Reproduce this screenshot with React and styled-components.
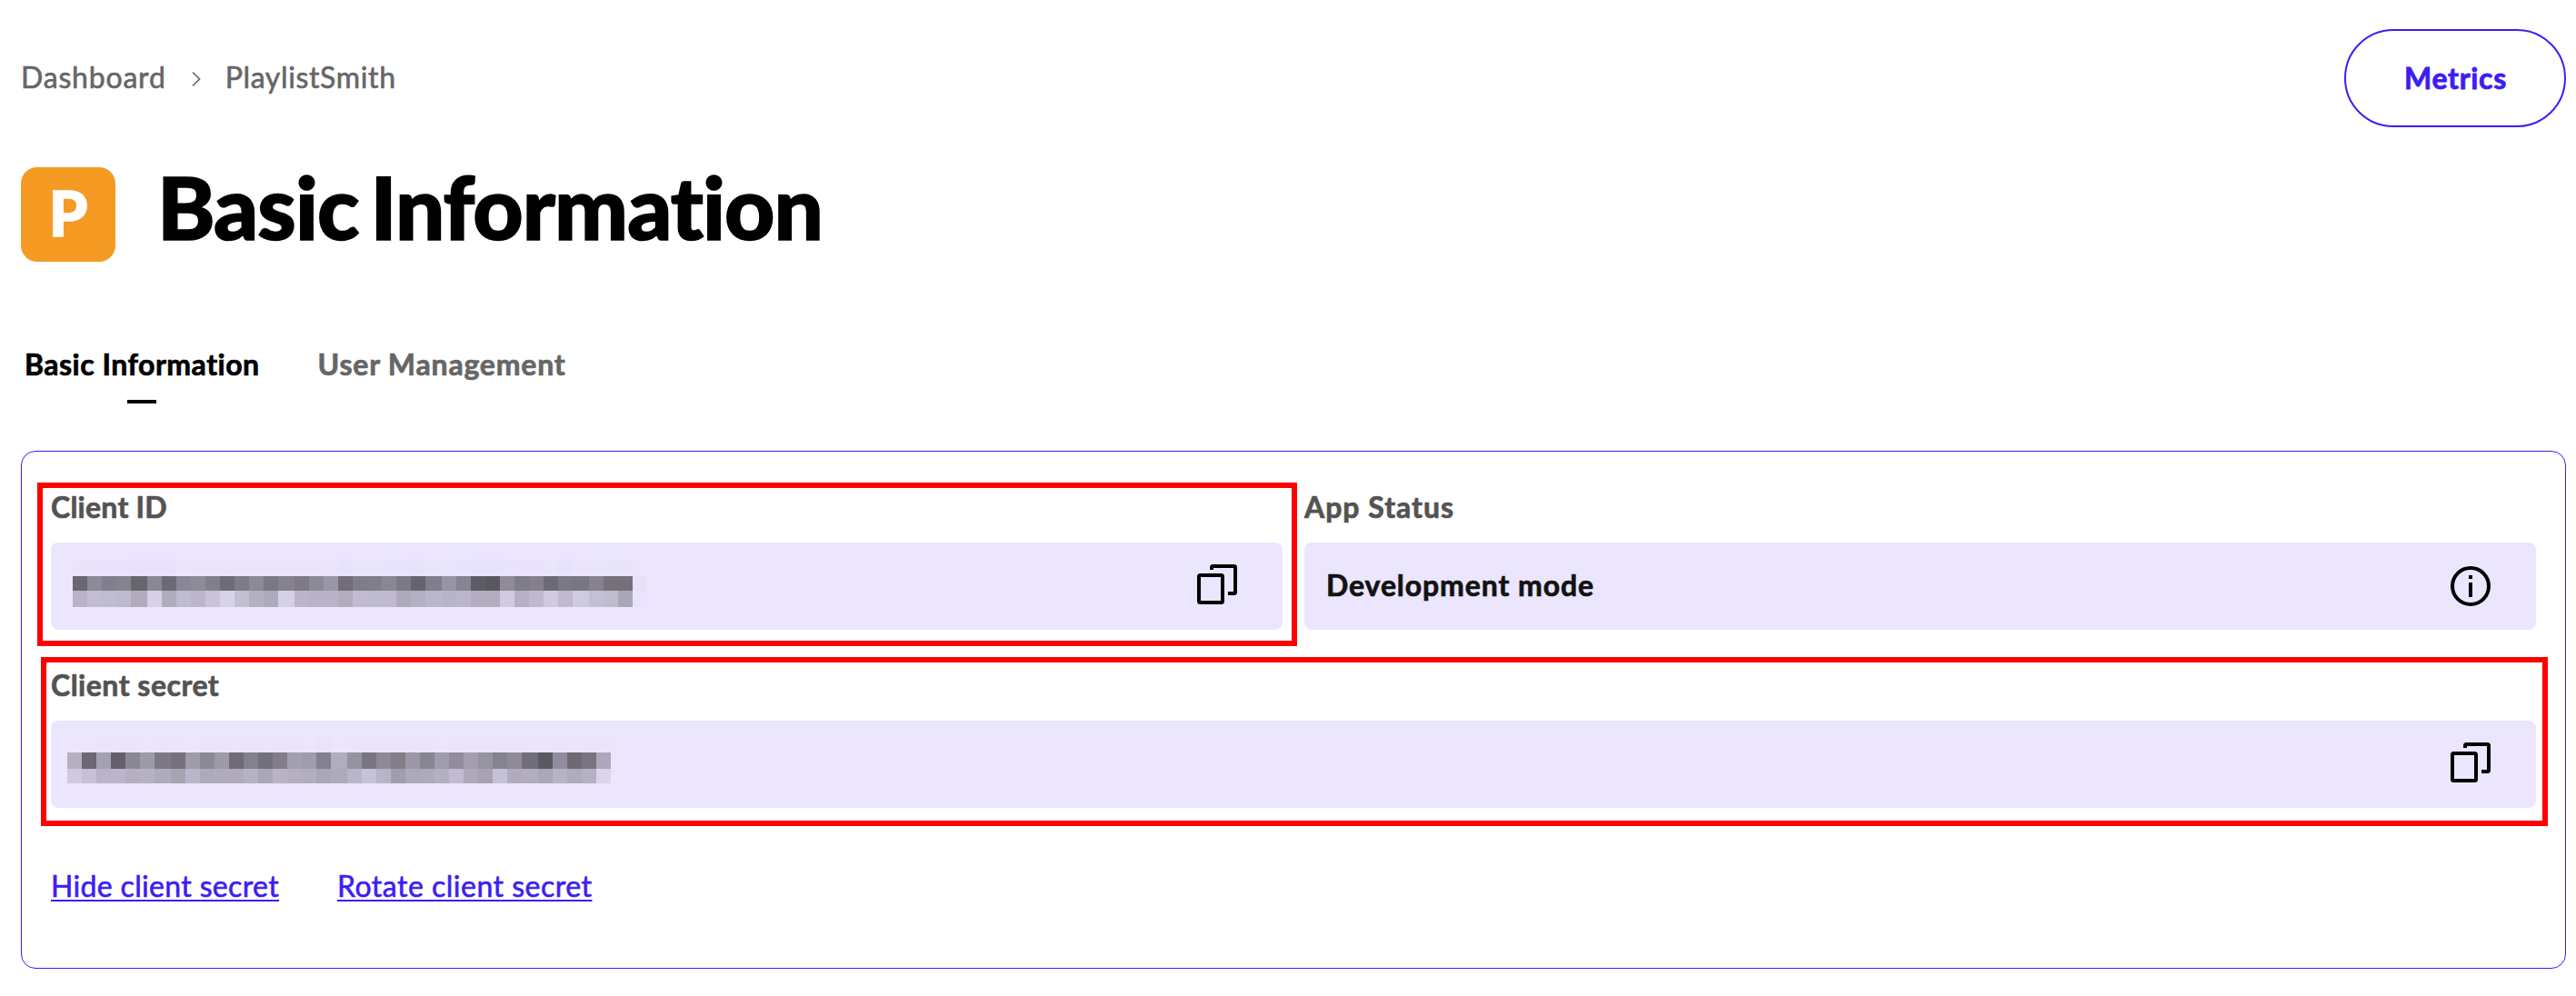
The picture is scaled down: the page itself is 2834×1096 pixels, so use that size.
import React from "react";
import styled, { createGlobalStyle } from "styled-components";

const violet = "#3d1df3";
const lavender = "#ebe6fe";

const GlobalStyle = createGlobalStyle`
  *, *::before, *::after { box-sizing: border-box; }
  body {
    margin: 0;
    background: #fff;
    color: #000;
    font-family: Lato, "Open Sans", sans-serif;
    font-size: 32px;
    line-height: 40px;
  }
`;

const Page = styled.main`
  display: flex;
  flex-direction: column;
  padding: 32px 11px 30px 23px;
`;

const TopBar = styled.header`
  display: flex;
  align-items: center;
  justify-content: space-between;
  height: 108px;
`;

const Breadcrumb = styled.nav`
  display: flex;
  align-items: center;
  padding-bottom: 2px;
  color: #666;
  -webkit-text-stroke: 0.6px currentColor;
`;

const Crumb = styled.span`
  letter-spacing: ${(p) => p.$tracking}px;
  white-space: nowrap;
`;

const Chevron = styled.svg`
  display: block;
  width: 12px;
  height: 18px;
  margin: 3px 26px 0 27px;
`;

const OutlineButton = styled.button`
  width: 244px;
  height: 108px;
  padding: 0 0 1px 1px;
  border: 2px solid ${violet};
  border-radius: 54px;
  background: transparent;
  color: ${violet};
  font: inherit;
  font-weight: 700;
  letter-spacing: 0.7px;
  -webkit-text-stroke: 0.8px currentColor;
`;

const TitleRow = styled.div`
  display: flex;
  gap: 46px;
  height: 104px;
  margin-top: 44px;
`;

const AppBadge = styled.div`
  display: flex;
  align-items: center;
  justify-content: center;
  width: 104px;
  height: 104px;
  padding: 0 0 4px 0;
  border-radius: 18px;
  background: #f59b23;
  color: #fff;
  font-size: 68px;
  font-weight: 900;
  -webkit-text-stroke: 1.6px currentColor;
`;

const Title = styled.h1`
  margin: 0;
  font-size: 96px;
  font-weight: 900;
  line-height: 86px;
  letter-spacing: -0.9px;
  word-spacing: -9px;
  white-space: nowrap;
  -webkit-text-stroke: 1.6px currentColor;
`;

const Tabs = styled.nav`
  display: flex;
  gap: 64px;
  height: 63px;
  margin-top: 93px;
  padding-left: 4px;
`;

const Tab = styled.div`
  display: flex;
  flex-direction: column;
  align-items: center;
  gap: 19px;
  color: ${(p) => (p.$active ? "#000" : "#666")};
  font-weight: 700;
  letter-spacing: ${(p) => p.$tracking}px;
  white-space: nowrap;
  -webkit-text-stroke: 0.7px currentColor;
`;

const TabMarker = styled.span`
  width: 32px;
  height: 4px;
  background: #000;
`;

const Card = styled.section`
  height: 570px;
  margin-top: 52px;
  padding: 41px 32px;
  border: 1px solid ${violet};
  border-radius: 16px;
`;

const FieldGrid = styled.div`
  display: grid;
  grid-template-columns: 1fr 1fr;
  gap: 41px 24px;
`;

const Field = styled.div`
  position: relative;
  display: flex;
  flex-direction: column;
  gap: 19px;
  grid-column: ${(p) => (p.$wide ? "1 / -1" : "auto")};
`;

const Highlight = styled.div`
  position: absolute;
  inset: ${(p) => p.$inset};
  border: 6px solid #f00;
  pointer-events: none;
`;

const Label = styled.div`
  color: #535353;
  font-weight: 700;
  letter-spacing: ${(p) => p.$tracking}px;
  -webkit-text-stroke: 0.7px currentColor;
`;

const ValueBox = styled.div`
  display: flex;
  align-items: center;
  justify-content: space-between;
  height: 96px;
  padding: 0 50px 0 ${(p) => p.$indent}px;
  border-radius: 8px;
  background: ${lavender};
`;

const ValueText = styled.span`
  padding-bottom: 2px;
  color: #121212;
  font-weight: 700;
  letter-spacing: 0.9px;
  -webkit-text-stroke: 0.7px currentColor;
`;

const IconSvg = styled.svg`
  display: block;
  width: 44px;
  height: 44px;
  margin-bottom: ${(p) => p.$lift || 0}px;
  fill: none;
  stroke: #000;
  stroke-width: 4;
`;

const Mosaic = styled.div`
  display: flex;
  flex-direction: column;
  align-self: flex-start;
  margin-top: ${(p) => p.$top}px;
`;

const MosaicRow = styled.div`
  display: flex;
  height: ${(p) => p.$height}px;
`;

const MosaicCell = styled.span`
  flex: none;
  width: ${(p) => (p.$wide ? 18 : 16)}px;
`;

const Links = styled.div`
  display: flex;
  gap: 64px;
  margin-top: 66px;
`;

const TextLink = styled.a`
  color: ${violet};
  letter-spacing: ${(p) => p.$tracking}px;
  text-decoration: underline;
  text-decoration-thickness: 2px;
  text-decoration-skip-ink: none;
  text-underline-offset: 3px;
  -webkit-text-stroke: 0.6px currentColor;
`;

const idMosaic = {
  top: 19,
  wide: [4, 14, 24, 34],
  rows: [
    [18, "e9e4fc e9e4fc e9e4fc e9e4fc e8e3fb e8e3fb e8e3fb ebe6fe eae5fd eae5fd eae5fd eae5fd eae5fd eae5fd eae5fd eae5fd eae5fd eae5fd e7e3fa eae5fd eae5fd e8e4fb e9e4fc e7e3fa e9e5fc eae5fd e8e4fb e7e3fa e7e3fa e9e4fc e9e4fc e9e4fc eae5fd e7e3fa eae5fd eae5fd e8e4fb e9e4fc"],
    [16, "6a6672 8c8998 817f8d 868390 68656f 8a8795 6d6974 898695 8e8b99 817f8d 6f6b77 7e7a87 8c8998 7c7883 85818e 7d7a86 8c8998 9a96a6 706d78 807c87 7f7e8b 8a8794 7c7984 66636e 807e8b 9994a5 868490 5d5b65 5a5761 908b9a 7f7c87 84808b 6d6a75 7c7984 7a7681 85828d 757079 75717c e6e1f7"],
    [18, "b8b3c7 c2bdd1 bfbcd0 bfb9cf b0acbd d6d1e8 b0acbd bebbd0 bcb6cb c8c3d8 d7d2e8 c3bfd3 b4b0c2 adaabb d6d0e6 bab5c9 b8b3c7 b8b3c7 b1adbe c0bbd0 bdbbd0 bfbad0 aeaabb b4b0c3 bbb6cb b8b4c7 bbb6cb b2aebf b2aebf d0cbe1 b5b0c4 bfbad0 cfcae1 bfbad0 cfcae1 c4c0d4 bfbcd0 aaa6b7 e9e4fb"],
  ],
};

const secretMosaic = {
  top: 18,
  wide: [6, 18, 31],
  rows: [
    [17, "ebe6fe ebe6fe eae5fd eae5fd eae5fd ebe6fe eae5fd eae5fd ece7ff eae5fd eae5fd eae5fd eae5fd eae5fd eae5fd eae5fd ebe6fe e9e4fc ebe6fe eae5fd eae5fd eae5fd eae5fd eae5fd eae5fd ebe6fe eae5fd eae5fd eae5fd eae5fd eae5fd eae5fd eae5fd eae5fd eae5fd eae5fd eae5fd"],
    [18, "b4afc1 6b6874 a5a1b2 64606b 8b8795 9e9aaa 7d7984 75717c a09bab 8c8996 9e9aaa 706b76 838190 73707b 817e89 a39fb0 a09cab 83818f b1adbf 9693a1 797580 8c8995 827e89 9c97a8 878592 a09cad 928d9d a29eae 9893a3 858390 8f8b98 716e79 5a5862 928d9e 6d6974 797580 aca7ba"],
    [16, "cfcae0 c6c0d5 b8b3c6 bab5ca b4b0c2 b6b1c5 b0acbe a7a3b3 bab5ca aeaabc b0acbd afabbc b6b1c5 aba7b8 b8b3c7 b4b0c2 b2aebf aaa6b7 adaabb b9b4ca c6c1d8 b8b3c7 a09dad ada9bb adaabb b4b0c2 c1bbd2 ada9bb a6a2b2 c6c1d7 b0acbd b2aebf aba7b8 b7b3c5 b0acbf b5b0c4 dad5eb"],
  ],
};

function RedactedValue({ data }) {
  return (
    <Mosaic $top={data.top}>
      {data.rows.map(([height, colors], r) => (
        <MosaicRow key={r} $height={height}>
          {colors.split(" ").map((c, i) => (
            <MosaicCell key={i} $wide={data.wide.includes(i)} style={{ background: `#${c}` }} />
          ))}
        </MosaicRow>
      ))}
    </Mosaic>
  );
}

function CopyIcon() {
  return (
    <IconSvg viewBox="0 0 44 44" $lift={4}>
      <rect x="2" y="12" width="26" height="30" rx="1.5" />
      <path d="M16 6V3.5A1.5 1.5 0 0 1 17.5 2H40.5A1.5 1.5 0 0 1 42 3.5V30.5A1.5 1.5 0 0 1 40.5 32H34" />
    </IconSvg>
  );
}

function InfoIcon() {
  return (
    <IconSvg viewBox="0 0 44 44">
      <circle cx="22" cy="22" r="20" />
      <path d="M22 10v4M22 18v16" />
    </IconSvg>
  );
}

export default function App() {
  return (
    <>
      <GlobalStyle />
      <Page>
        <TopBar>
          <Breadcrumb>
            <Crumb $tracking={0.8}>Dashboard</Crumb>
            <Chevron viewBox="0 0 12 18" fill="none" stroke="#666" strokeWidth="1.7">
              <path d="M2 1.5L9.5 9L2 16.5" />
            </Chevron>
            <Crumb $tracking={0.65}>PlaylistSmith</Crumb>
          </Breadcrumb>
          <OutlineButton>Metrics</OutlineButton>
        </TopBar>

        <TitleRow>
          <AppBadge>P</AppBadge>
          <Title>Basic Information</Title>
        </TitleRow>

        <Tabs>
          <Tab $active $tracking={0.5}>
            Basic Information
            <TabMarker />
          </Tab>
          <Tab $tracking={0.8}>User Management</Tab>
        </Tabs>

        <Card>
          <FieldGrid>
            <Field>
              <Label $tracking={0.25}>Client ID</Label>
              <ValueBox $indent={24}>
                <RedactedValue data={idMosaic} />
                <CopyIcon />
              </ValueBox>
              <Highlight $inset="-7px -16px -18px -15px" />
            </Field>
            <Field>
              <Label $tracking={1}>App Status</Label>
              <ValueBox $indent={24}>
                <ValueText>Development mode</ValueText>
                <InfoIcon />
              </ValueBox>
            </Field>
            <Field $wide>
              <Label $tracking={0.5}>Client secret</Label>
              <ValueBox $indent={18}>
                <RedactedValue data={secretMosaic} />
                <CopyIcon />
              </ValueBox>
              <Highlight $inset="-11px -13px -20px -11px" />
            </Field>
          </FieldGrid>
          <Links>
            <TextLink $tracking={0.34}>Hide client secret</TextLink>
            <TextLink $tracking={0.5}>Rotate client secret</TextLink>
          </Links>
        </Card>
      </Page>
    </>
  );
}
